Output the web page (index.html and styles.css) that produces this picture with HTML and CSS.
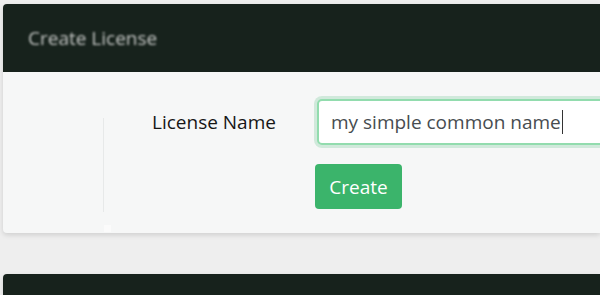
FILE: index.html
```html
<!DOCTYPE html>
<html>
<head>
<meta charset="utf-8">
<link rel="stylesheet" href="styles.css">
</head>
<body>
<div class="page">
  <section class="card">
    <header class="card-header"><h2 class="card-title">Create License</h2></header>
    <div class="card-body">
      <div class="rail"><div class="rail-line"></div><div class="rail-tick"></div></div>
      <form class="form">
        <div class="form-row">
          <label class="label">License Name</label>
          <div class="input" role="textbox">my simple common name<span class="caret"></span></div>
        </div>
        <div class="form-row">
          <span class="label"></span>
          <button class="btn" type="button">Create</button>
        </div>
      </form>
    </div>
  </section>
  <section class="card card-next">
    <header class="card-header card-header-cut"></header>
  </section>
</div>
</body>
</html>
```
FILE: styles.css
```css
html, body {
  margin: 0;
  padding: 0;
  background: #eeeeee;
  overflow: hidden;
  width: 600px;
  height: 295px;
  font-family: "Open Sans", "Noto Sans", sans-serif;
}
.page {
  padding: 4px 0 0 3px;
  box-sizing: border-box;
  width: 600px;
}
.card {
  background: #f6f7f7;
  border-radius: 4px 0 0 4px;
  box-shadow: 0 2px 5px rgba(0,0,0,0.13);
  overflow: hidden;
}
.card-header {
  background: #17221c;
  height: 68px;
  display: flex;
  align-items: center;
  padding-left: 25px;
}
.card-title {
  margin: 0;
  font-size: 19px;
  font-weight: 400;
  color: #c4c6c4;
  filter: blur(1.1px);
}
.card-body {
  display: flex;
  height: 161px;
  padding-top: 25px;
  box-sizing: border-box;
}
.rail {
  width: 101px;
  flex: none;
  display: flex;
  flex-direction: column;
  align-items: flex-end;
  padding-top: 21px;
}
.rail-line {
  width: 1px;
  height: 94px;
  background: #e7e9e9;
}
.rail-tick {
  width: 7px;
  height: 7px;
  margin-top: 13px;
  margin-right: -7px;
  background: #fbfbfb;
}
.form {
  display: flex;
  flex-direction: column;
  gap: 17px;
}
.form-row {
  display: flex;
  align-items: center;
}
.label {
  width: 163px;
  padding-left: 48px;
  flex: none;
  font-size: 19px;
  color: #161616;
}
.input {
  width: 290px;
  height: 46px;
  box-sizing: border-box;
  margin: 2px 0 2px 2px;
  border: 2px solid #92dcae;
  border-radius: 5px;
  background: #ffffff;
  box-shadow: 0 0 0 3px rgba(60,180,108,0.2);
  padding-left: 12px;
  display: flex;
  align-items: center;
  font-size: 19px;
  color: #474c50;
  white-space: nowrap;
}
.caret {
  display: inline-block;
  width: 1px;
  height: 24px;
  background: #333;
  margin-left: 1px;
}
.btn {
  width: 87px;
  height: 45px;
  border: none;
  border-radius: 4px;
  background: #3bb46b;
  color: #ffffff;
  font-family: inherit;
  font-size: 19px;
  padding: 0;
}
.card-next {
  margin-top: 41px;
  border-radius: 4px 0 0 0;
}
.card-header-cut {
  height: 21px;
}
```
